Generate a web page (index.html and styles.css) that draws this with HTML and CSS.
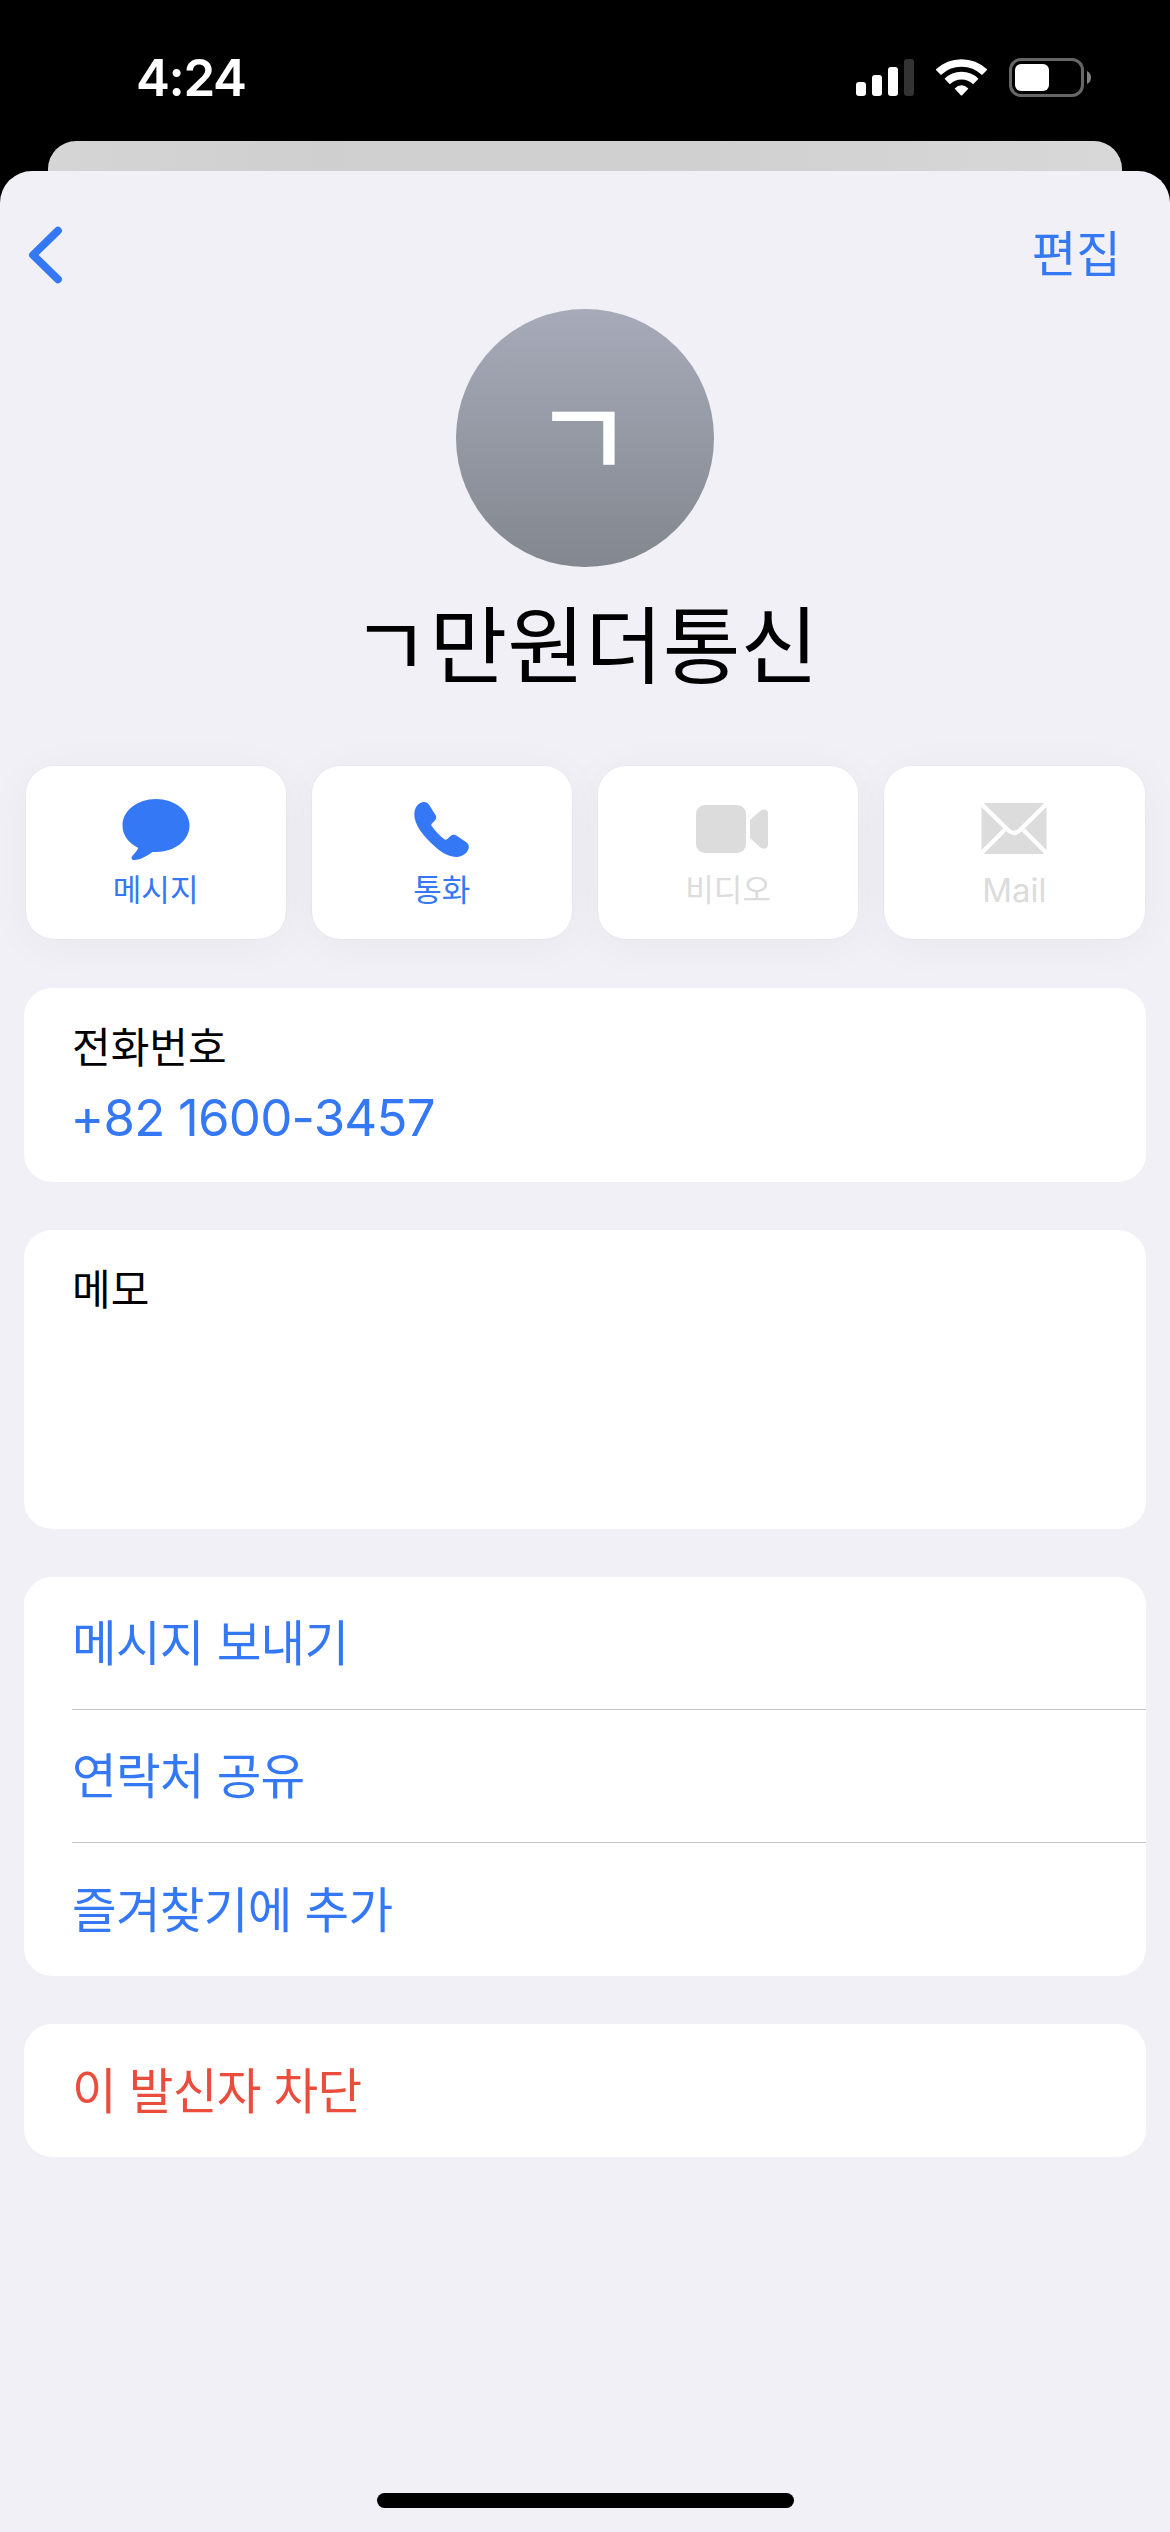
FILE: index.html
```html
<!DOCTYPE html>
<html lang="ko">
<head>
<meta charset="utf-8">
<title>연락처</title>
<link rel="stylesheet" href="styles.css">
</head>
<body>
<div class="screen">
  <header class="status">
    <span class="time">4:24</span>
    <div class="indicators">
      <svg class="signal" width="58" height="37" viewBox="0 0 58 37" fill="#fff">
        <rect x="0" y="23" width="10" height="14" rx="3"/>
        <rect x="16" y="16" width="10" height="21" rx="3"/>
        <rect x="32" y="8" width="10" height="29" rx="3"/>
        <rect x="48" y="0" width="10" height="37" rx="3" fill="#333"/>
      </svg>
      <svg class="wifi" width="51" height="37" viewBox="0 0 51 37" fill="none" stroke="#fff" stroke-width="7.6">
        <path d="M2.3 13.4A33.2 33.2 0 0 1 48.7 13.4"/>
        <path d="M11.2 22.5A20.4 20.4 0 0 1 39.8 22.5"/>
        <path d="M18.6 29.4Q25.5 23.2 32.4 29.4L26.2 36.2Q25.5 37 24.8 36.2Z" fill="#fff" stroke="none"/>
      </svg>
      <svg class="battery" width="83" height="39" viewBox="0 0 83 39">
        <rect x="1.5" y="1.5" width="72" height="36" rx="10.5" fill="none" stroke="#666" stroke-width="3"/>
        <rect x="6" y="6" width="34" height="27" rx="6" fill="#fff"/>
        <path d="M78 13Q82 15 82 19.5T78 26Z" fill="#808080"/>
      </svg>
    </div>
  </header>
  <div class="sheet-behind"></div>
  <main class="sheet">
    <nav class="nav">
      <svg width="34" height="58" viewBox="0 0 34 58" fill="none" stroke="#3478f6" stroke-width="7.8" stroke-linecap="round" stroke-linejoin="round"><path d="M29 4.600L4 29L29 53.400"/></svg>
      <a class="edit">편집</a>
    </nav>
    <div class="avatar"><span>ㄱ</span></div>
    <h1 class="name">ㄱ만원더통신</h1>
    <div class="actions">
      <div class="action">
        <svg width="68" height="62" viewBox="0 0 68 62" fill="currentColor"><path d="M34 0C52.500 0 67.500 11.500 67.500 26.500S52.500 53 34 53C32.500 53 31 52.800 30.500 53C26 56.500 18 61 12.500 61C9.500 61 8.800 59 10.300 57C12.500 54.500 15 52 16.200 49C6 43.500 .5 36 .5 26.500C.5 11.500 15.500 0 34 0Z"/></svg>
        <span>메시지</span>
      </div>
      <div class="action">
        <svg width="68" height="62" viewBox="0 0 68 62" fill="currentColor"><path d="M16 3C18.500 3 20 4.200 21 5.800L27.500 16C28.700 18 28.500 19.500 27 21.300L24 24.500C23 25.500 23.200 26.500 24 27.500C27.500 32.500 31.500 36.500 36 40C37.200 41 38.200 41 39.300 40L42.500 37C44.500 35.200 46.700 35.300 48.800 36.800L58.200 43.300C60 44.500 60.800 46 60.800 48C60.800 52.500 55 58 48.500 58C42 58 35 54.500 28 48.500C15 37.500 6.300 25.500 6.300 15.500C6.300 8 11 3 16 3Z"/></svg>
        <span>통화</span>
      </div>
      <div class="action disabled">
        <svg class="camera" width="72" height="62" viewBox="0 0 72 62" fill="currentColor"><rect y="6" width="50" height="48" rx="9"/><path d="M54 21L64.500 11.800Q66 10.600 68 10.600Q72 10.800 72 14.500V45.500Q72 49.500 68 49.700Q66 49.700 64.500 48.400L54 39Z"/></svg>
        <span>비디오</span>
      </div>
      <div class="action disabled">
        <svg width="66" height="62" viewBox="0 0 66 62"><rect x=".5" y="4" width="65" height="51" rx="4" fill="currentColor"/><path d="M-1 3.500L27.500 31.500Q33 36.500 38.500 31.500L67 3.500M-1 55.500L23.500 31M67 55.500L42.500 31" fill="none" stroke="#fff" stroke-width="4.200"/></svg>
        <span class="latin">Mail</span>
      </div>
    </div>
    <section class="card phone">
      <span class="label">전화번호</span>
      <a class="number">+82 1600-3457</a>
    </section>
    <section class="card memo"><span class="label">메모</span></section>
    <section class="card">
      <a class="row">메시지 보내기</a>
      <a class="row">연락처 공유</a>
      <a class="row">즐겨찾기에 추가</a>
    </section>
    <section class="card"><a class="row danger">이 발신자 차단</a></section>
    <div class="home"></div>
  </main>
</div>
</body>
</html>
```
FILE: styles.css
```css
* { box-sizing: border-box; }
body { margin: 0; background: #000; font-family: Inter, "Noto Sans CJK KR", sans-serif; }
svg { display: block; flex: none; }
.screen { width: 1170px; height: 2532px; display: flex; flex-direction: column; overflow: hidden; background: #000; }

.status { height: 141px; padding: 58px 78px 0 136px; display: flex; justify-content: space-between; align-items: flex-start; }
.time { color: #fff; font-size: 51px; line-height: 39px; font-weight: 600; letter-spacing: -1.400px; }
.indicators { display: flex; gap: 22px; }
.signal, .wifi { margin-top: 1px; }

.sheet-behind { height: 30px; margin: 0 48px; border-radius: 28px 28px 0 0; background: linear-gradient(90deg, #d5d5d5, #cfcfcf 25%, #d0d0d0 60%, #d8d8d8); }
.sheet { flex: 1; display: flex; flex-direction: column; background: #f1f0f6; border-radius: 32px 32px 0 0; }

.nav { height: 138px; padding: 55px 49px 0 29px; display: flex; justify-content: space-between; }
.edit { color: #3478f6; font-size: 48.500px; line-height: 58px; }
.avatar { width: 258px; height: 258px; border-radius: 50%; align-self: center; background: linear-gradient(#a7abb9, #83878f); display: flex; justify-content: center; color: #fff; }
.avatar span { font-size: 109px; line-height: 260px; font-weight: 500; margin-right: 3px; }
.name { margin: 24px 0 0; height: 110px; text-align: center; font-size: 84.500px; line-height: 110px; font-weight: 400; color: #000; }

.actions { display: grid; grid-template-columns: repeat(4, 1fr); gap: 26px; padding: 0 25.500px; margin: 65px 0 49px; }
.action { height: 173px; padding: 33px 0 0; display: flex; flex-direction: column; align-items: center; gap: 9px; border-radius: 28px; background: #fff; color: #3478f6; box-shadow: 0 0 0 1px rgba(0,0,0,.02), 0 6px 48px rgba(0,0,0,.04); }
.action span { font-size: 31px; line-height: 40px; }
.action .latin { font-size: 33px; }
.camera { margin-left: 8px; }
.disabled { color: #dcdcdc; }

.card { margin: 0 24px 48px; background: #fff; border-radius: 28px; }
.phone { height: 194px; padding: 35px 48px; display: flex; flex-direction: column; }
.label { font-size: 42px; line-height: 50px; color: #000; }
.number { color: #3478f6; font-size: 51px; line-height: 58px; margin: 16px 0 0 -1.500px; letter-spacing: -.8px; }
.memo { height: 299px; padding: 35px 48px; }
.memo .label { display: block; }
.row { margin-left: 48px; height: 133px; padding-bottom: 6px; display: flex; align-items: center; color: #3478f6; font-size: 48.500px; letter-spacing: -.7px; }
.row:not(:last-child) { border-bottom: 1px solid #c6c6c8; }
.danger { color: #eb4d3d; }
.home { width: 417px; height: 15px; border-radius: 8px; background: #000; margin: auto auto 24px; }
```
